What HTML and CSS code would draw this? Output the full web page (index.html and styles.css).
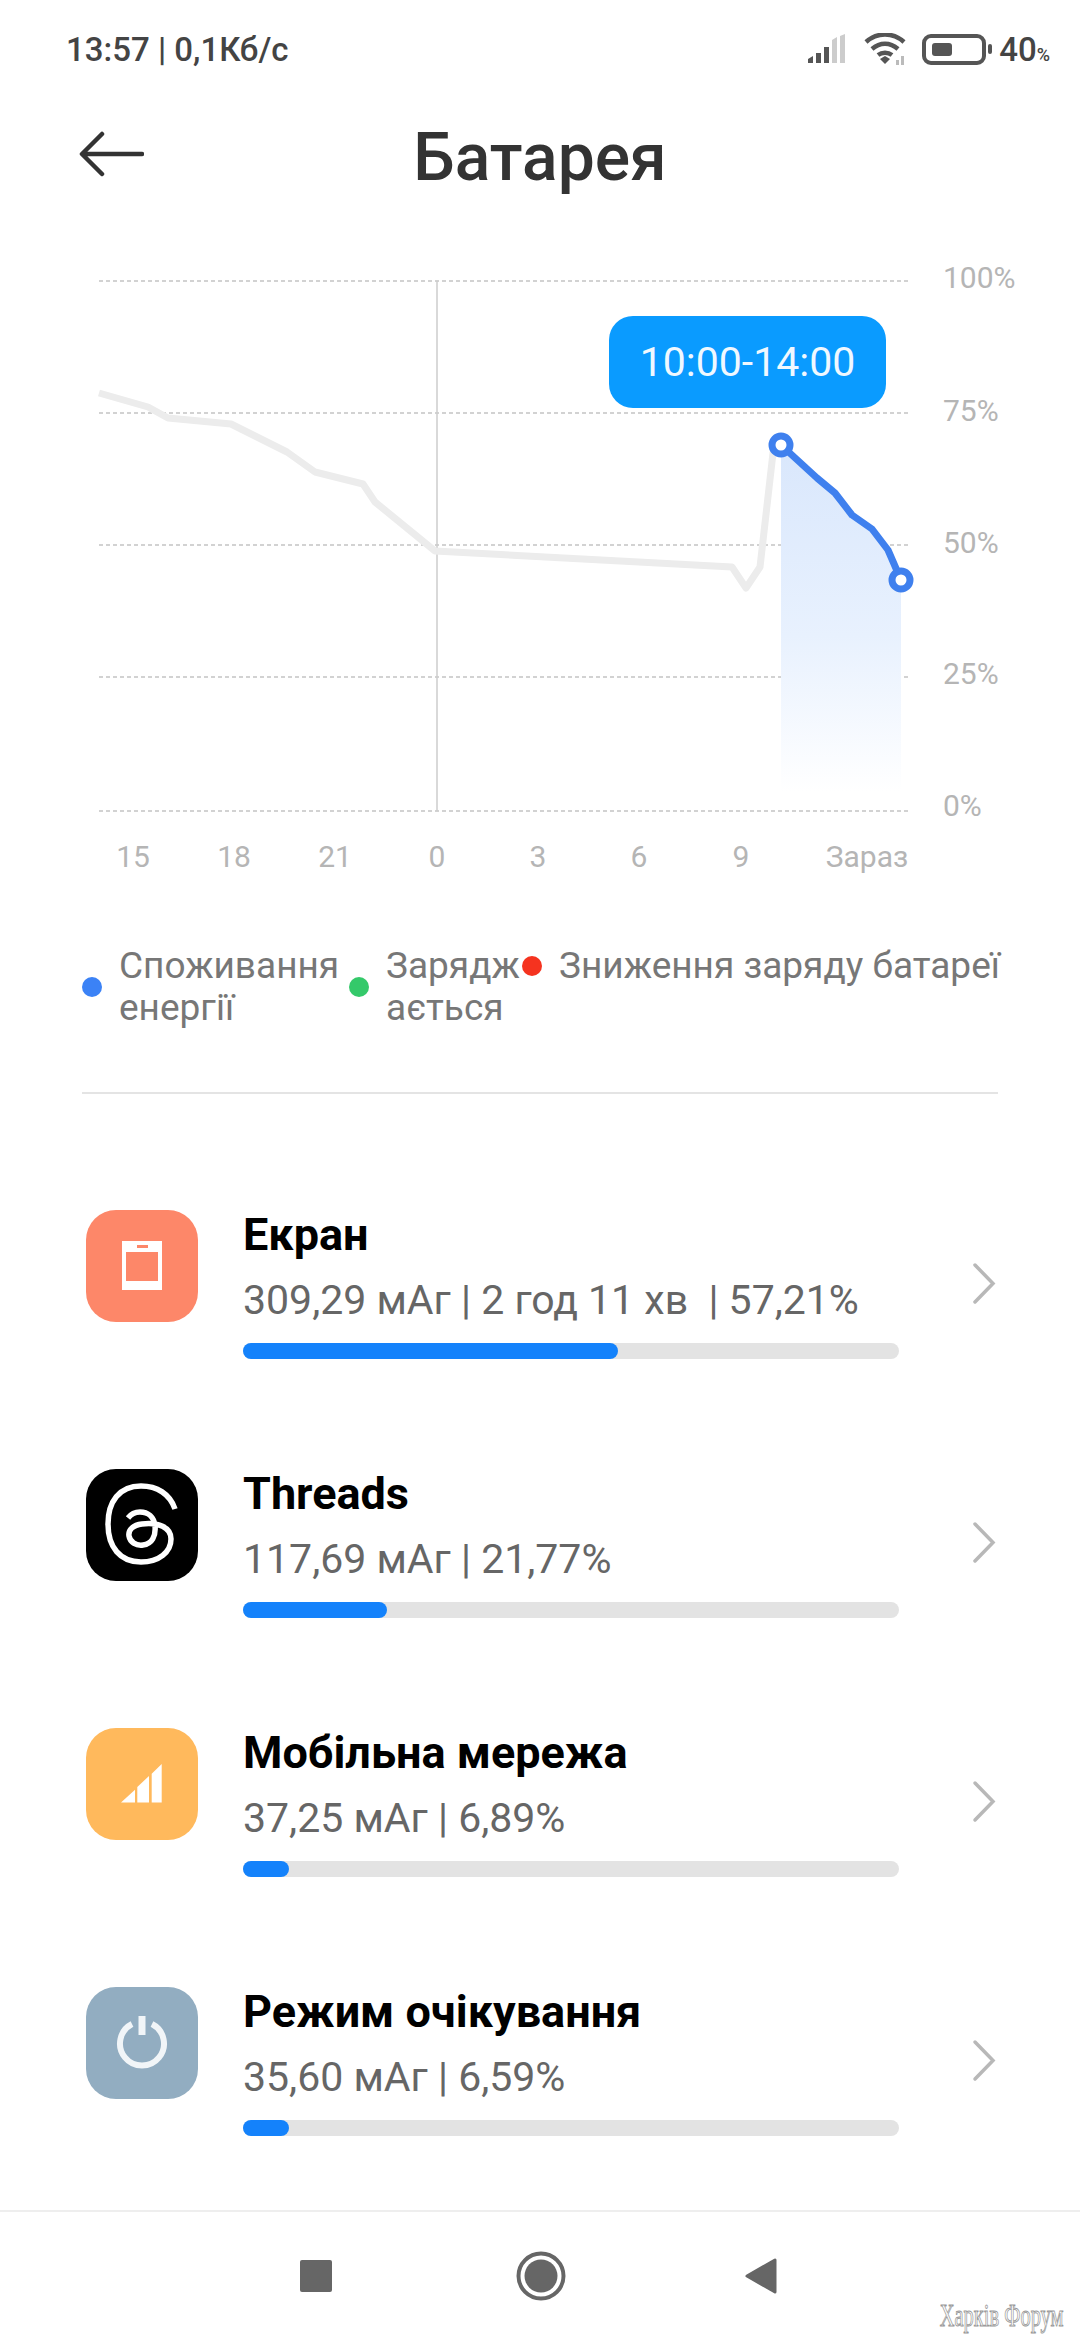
FILE: index.html
```html
<!DOCTYPE html>
<html lang="uk">
<head>
    <meta charset="UTF-8">
    <meta name="viewport" content="width=device-width, initial-scale=1.0">
    <title>Батарея</title>
    <link rel="stylesheet" href="styles.css">
</head>
<body>
    <div class="screen">
        <div class="status-bar">
            <div class="status-text">13:57 | 0,1Кб/с</div>
            <div class="status-icons">
                <svg class="signal-icon" width="42" height="30" viewBox="0 0 42 30">
                    <path class="dark" d="M1 29V25L6 22V29Z M9 29V19H14V29Z M17 29V13H22V29Z"/>
                    <path class="light" d="M25 29V6L30 3V29Z M33 29V2L38 0V29Z"/>
                </svg>
                <svg class="wifi-icon" width="46" height="32" viewBox="0 0 46 32">
                    <path d="M3 9C14 -1 30 -1 41 9 M9 16C17 9 27 9 35 16 M15 22C19 19 25 19 29 22" fill="none" stroke="#555" stroke-width="4.5"/>
                    <path d="M17 26L22 23L27 26L22 31Z" fill="#555"/>
                    <path d="M33 27H36V32H33Z M38 23H41V32H38Z" fill="#bbb"/>
                </svg>
                <div class="battery">
                    <div class="battery-level"></div>
                </div>
                <div class="battery-nub"></div>
                <div class="battery-text">40<span class="battery-percent">%</span></div>
            </div>
        </div>

        <div class="header">
            <svg class="back-icon" width="66" height="46" viewBox="0 0 66 46">
                <path d="M64 23H5 M24 3L4 23L24 43" fill="none" stroke="#333" stroke-width="4.5" stroke-linecap="round" stroke-linejoin="round"/>
            </svg>
            <h1>Батарея</h1>
        </div>

        <div class="chart">
            <svg width="1080" height="620" viewBox="0 260 1080 620">
                <defs>
                    <linearGradient id="area-fill" x1="0" y1="0" x2="0" y2="1">
                        <stop offset="0" stop-color="#d9e7fc"/>
                        <stop offset="0.55" stop-color="#e8f1fe"/>
                        <stop offset="1" stop-color="#ffffff"/>
                    </linearGradient>
                </defs>
                <line class="grid-line" x1="99" y1="281" x2="910" y2="281"/>
                <line class="grid-line" x1="99" y1="413" x2="910" y2="413"/>
                <line class="grid-line" x1="99" y1="545" x2="910" y2="545"/>
                <line class="grid-line" x1="99" y1="677" x2="910" y2="677"/>
                <line class="grid-line" x1="99" y1="811" x2="910" y2="811"/>
                <line class="midnight-line" x1="437" y1="281" x2="437" y2="811"/>

                <path d="M781 445L817 478L835 493L852 515L872 529L888 550L901 580V792H781Z" fill="url(#area-fill)"/>
                <polyline class="history-line" points="99,393 148,407 168,418 231,424 287,452 315,472 363,484 375,502 435,551 732,567 746,588 760,567 773,453 781,445"/>
                <polyline class="usage-line" points="781,445 817,478 835,493 852,515 872,529 888,550 901,580"/>
                <circle class="usage-node" cx="781" cy="445" r="9"/>
                <circle class="usage-node" cx="901" cy="580" r="9"/>

                <text class="axis-label" x="943" y="288">100%</text>
                <text class="axis-label" x="943" y="421">75%</text>
                <text class="axis-label" x="943" y="553">50%</text>
                <text class="axis-label" x="943" y="684">25%</text>
                <text class="axis-label" x="943" y="816">0%</text>

                <text class="axis-label hour" x="133" y="867">15</text>
                <text class="axis-label hour" x="234" y="867">18</text>
                <text class="axis-label hour" x="335" y="867">21</text>
                <text class="axis-label hour" x="437" y="867">0</text>
                <text class="axis-label hour" x="538" y="867">3</text>
                <text class="axis-label hour" x="639" y="867">6</text>
                <text class="axis-label hour" x="741" y="867">9</text>
                <text class="axis-label hour" x="867" y="867">Зараз</text>
            </svg>
            <div class="chart-tooltip">10:00-14:00</div>
        </div>

        <div class="legend">
            <div class="legend-item first">
                <span class="legend-dot blue"></span>
                <span>Споживання<br>енергії</span>
            </div>
            <div class="legend-item second">
                <span class="legend-dot green"></span>
                <span>Зарядж<br>ається</span>
            </div>
            <div class="legend-item third">
                <span class="legend-dot red"></span>
                <span>Зниження заряду батареї</span>
            </div>
        </div>

        <div class="divider"></div>

        <div class="usage-list">
            <div class="usage-row">
                <div class="app-icon screen-bg">
                    <svg width="112" height="112" viewBox="0 0 112 112">
                        <path fill-rule="evenodd" fill="#fff" d="M36 31H76V80H36Z M40 42V71H72V42Z M51 35V38H62V35Z"/>
                    </svg>
                </div>
                <div class="usage-info">
                    <div class="usage-name">Екран</div>
                    <div class="usage-detail">309,29 мАг | 2 год 11 хв&nbsp; | 57,21%</div>
                    <div class="usage-bar"><div class="usage-fill" style="width: 57.2%"></div></div>
                </div>
                <svg class="chevron" width="26" height="44" viewBox="0 0 26 44">
                    <path d="M4 3L22 21.5L4 40" fill="none" stroke="#b8b8b8" stroke-width="3.5" stroke-linecap="round"/>
                </svg>
            </div>

            <div class="usage-row">
                <div class="app-icon threads-bg">
                    <svg width="112" height="112" viewBox="0 0 112 112">
                        <path d="M89 40C84 25 71 17 55 17C33 17 22 33 22 55C22 78 34 93 55 93C73 93 85 83 85 70C85 58 72 53 56 55C47 56 42 61 43 67C44 73 50 77 57 76C66 75 70 67 69 57C68 48 62 43 54 43C49 43 45 45 42 49" fill="none" stroke="#fff" stroke-width="5.5"/>
                    </svg>
                </div>
                <div class="usage-info">
                    <div class="usage-name">Threads</div>
                    <div class="usage-detail">117,69 мАг | 21,77%</div>
                    <div class="usage-bar"><div class="usage-fill" style="width: 22%"></div></div>
                </div>
                <svg class="chevron" width="26" height="44" viewBox="0 0 26 44">
                    <path d="M4 3L22 21.5L4 40" fill="none" stroke="#b8b8b8" stroke-width="3.5" stroke-linecap="round"/>
                </svg>
            </div>

            <div class="usage-row">
                <div class="app-icon network-bg">
                    <svg width="112" height="112" viewBox="0 0 112 112">
                        <path fill="#fff" d="M35 74.5L49 61.7V74.5Z M51.3 59L63 48V74.5H51.3Z M65.7 45.7L75.7 36V74.5H65.7Z"/>
                    </svg>
                </div>
                <div class="usage-info">
                    <div class="usage-name">Мобільна мережа</div>
                    <div class="usage-detail">37,25 мАг | 6,89%</div>
                    <div class="usage-bar"><div class="usage-fill" style="width: 7%"></div></div>
                </div>
                <svg class="chevron" width="26" height="44" viewBox="0 0 26 44">
                    <path d="M4 3L22 21.5L4 40" fill="none" stroke="#b8b8b8" stroke-width="3.5" stroke-linecap="round"/>
                </svg>
            </div>

            <div class="usage-row">
                <div class="app-icon standby-bg">
                    <svg width="112" height="112" viewBox="0 0 112 112">
                        <path d="M46 37A22 22 0 1 0 66 37" fill="none" stroke="#f1f5f8" stroke-width="6"/>
                        <path d="M56 29V48" fill="none" stroke="#f1f5f8" stroke-width="7"/>
                    </svg>
                </div>
                <div class="usage-info">
                    <div class="usage-name">Режим очікування</div>
                    <div class="usage-detail">35,60 мАг | 6,59%</div>
                    <div class="usage-bar"><div class="usage-fill" style="width: 7%"></div></div>
                </div>
                <svg class="chevron" width="26" height="44" viewBox="0 0 26 44">
                    <path d="M4 3L22 21.5L4 40" fill="none" stroke="#b8b8b8" stroke-width="3.5" stroke-linecap="round"/>
                </svg>
            </div>
        </div>

        <div class="nav-bar">
            <div class="nav-square"></div>
            <svg class="nav-home" width="50" height="50" viewBox="0 0 50 50">
                <circle cx="25" cy="25" r="22.5" fill="none" stroke="#666" stroke-width="4"/>
                <circle cx="25" cy="25" r="16.5" fill="#666"/>
            </svg>
            <svg class="nav-back" width="34" height="38" viewBox="0 0 34 38">
                <path d="M31 3V35L3 19Z" fill="#666" stroke="#666" stroke-width="3" stroke-linejoin="round"/>
            </svg>
        </div>

        <div class="watermark">Харків Форум</div>
    </div>
</body>
</html>
```

FILE: styles.css
```css
* {
    box-sizing: border-box;
}

body {
    font-family: 'Roboto', 'Noto Sans', sans-serif;
    margin: 0;
    padding: 0;
    background-color: #fff;
    color: #333;
}

.screen {
    position: relative;
    display: flex;
    flex-direction: column;
    width: 1080px;
    height: 2340px;
    overflow: hidden;
}

.status-bar {
    display: flex;
    justify-content: space-between;
    align-items: center;
    height: 96px;
    padding: 2px 30px 0 66px;
}

.status-text {
    font-size: 33px;
    font-weight: 500;
    color: #444;
}

.status-icons {
    display: flex;
    align-items: center;
}

.signal-icon {
    margin-right: 14px;
}

.dark {
    fill: #555;
}

.light {
    fill: #ccc;
}

.wifi-icon {
    margin-right: 13px;
}

.battery {
    width: 64px;
    height: 31px;
    padding: 5px 6px;
    border: 4px solid #555;
    border-radius: 9px;
}

.battery-level {
    width: 20px;
    height: 100%;
    background-color: #555;
    border-radius: 3px;
}

.battery-nub {
    width: 4px;
    height: 10px;
    margin-left: 2px;
    background-color: #555;
    border-radius: 2px;
}

.battery-text {
    margin-left: 7px;
    font-size: 33px;
    font-weight: 500;
    color: #444;
}

.battery-percent {
    font-size: 18px;
}

.header {
    position: relative;
    display: flex;
    align-items: center;
    justify-content: center;
    height: 120px;
}

.back-icon {
    position: absolute;
    left: 78px;
    top: 35px;
}

h1 {
    margin: 2px 0 0;
    font-size: 66px;
    font-weight: 500;
    color: #333;
}

.chart {
    position: relative;
    height: 620px;
    margin-top: 44px;
}

.chart svg {
    display: block;
}

.grid-line {
    stroke: #c4c4c4;
    stroke-width: 1.5;
    stroke-dasharray: 4 3;
}

.midnight-line {
    stroke: #cccccc;
    stroke-width: 1.5;
}

.history-line {
    fill: none;
    stroke: #ececec;
    stroke-width: 7;
    stroke-linejoin: round;
}

.usage-line {
    fill: none;
    stroke: #3f80ee;
    stroke-width: 7;
    stroke-linejoin: round;
}

.usage-node {
    fill: #fff;
    stroke: #3f80ee;
    stroke-width: 7;
}

.axis-label {
    font-size: 30px;
    fill: #b5b5b5;
}

.hour {
    text-anchor: middle;
}

.chart-tooltip {
    position: absolute;
    left: 609px;
    top: 56px;
    width: 277px;
    height: 92px;
    background-color: #0a9bff;
    border-radius: 24px;
    color: #f0f8ff;
    font-size: 41px;
    line-height: 92px;
    text-align: center;
}

.legend {
    display: flex;
    align-items: flex-start;
    height: 100px;
    margin-top: 65px;
    padding-left: 82px;
    font-size: 37px;
    line-height: 42px;
    color: #777;
}

.legend-item {
    display: flex;
    align-items: center;
}

.first {
    width: 267px;
}

.second {
    width: 173px;
}

.legend-dot {
    flex-shrink: 0;
    width: 20px;
    height: 20px;
    margin-right: 17px;
    border-radius: 50%;
}

.blue {
    background-color: #3b82f6;
}

.green {
    background-color: #34c96a;
}

.red {
    background-color: #f5331f;
}

.divider {
    height: 2px;
    margin: 47px 82px 0;
    background-color: #e4e4e4;
}

.usage-list {
    padding: 116px 0 0 86px;
}

.usage-row {
    display: flex;
    height: 259px;
}

.app-icon {
    flex-shrink: 0;
    width: 112px;
    height: 112px;
    border-radius: 30px;
}

.app-icon svg {
    display: block;
}

.screen-bg {
    background-color: #fd8769;
}

.threads-bg {
    background-color: #000;
}

.network-bg {
    background-color: #ffb95c;
}

.standby-bg {
    background-color: #92adc1;
}

.usage-info {
    width: 656px;
    margin-left: 45px;
}

.usage-name {
    height: 50px;
    font-size: 45px;
    font-weight: 700;
    line-height: 50px;
    color: #000;
}

.usage-detail {
    height: 48px;
    margin-top: 16px;
    font-size: 41px;
    line-height: 48px;
    color: #666;
}

.usage-bar {
    height: 16px;
    margin-top: 19px;
    background-color: #e3e3e3;
    border-radius: 8px;
}

.usage-fill {
    height: 100%;
    background-color: #1482fb;
    border-radius: 8px;
}

.chevron {
    margin: 52px 0 0 72px;
}

.nav-bar {
    position: absolute;
    left: 0;
    right: 0;
    bottom: 0;
    display: flex;
    align-items: center;
    height: 130px;
    padding-left: 300px;
    border-top: 2px solid #eeeeee;
}

.nav-square {
    width: 32px;
    height: 32px;
    background-color: #666;
    border-radius: 2px;
}

.nav-home {
    margin-left: 184px;
}

.nav-back {
    margin-left: 178px;
}

.watermark {
    position: absolute;
    right: 16px;
    bottom: 6px;
    font-family: 'Liberation Serif', serif;
    font-size: 32px;
    color: #fff;
    -webkit-text-stroke: 1px #999;
    transform: scaleX(0.64);
    transform-origin: right center;
}
```
